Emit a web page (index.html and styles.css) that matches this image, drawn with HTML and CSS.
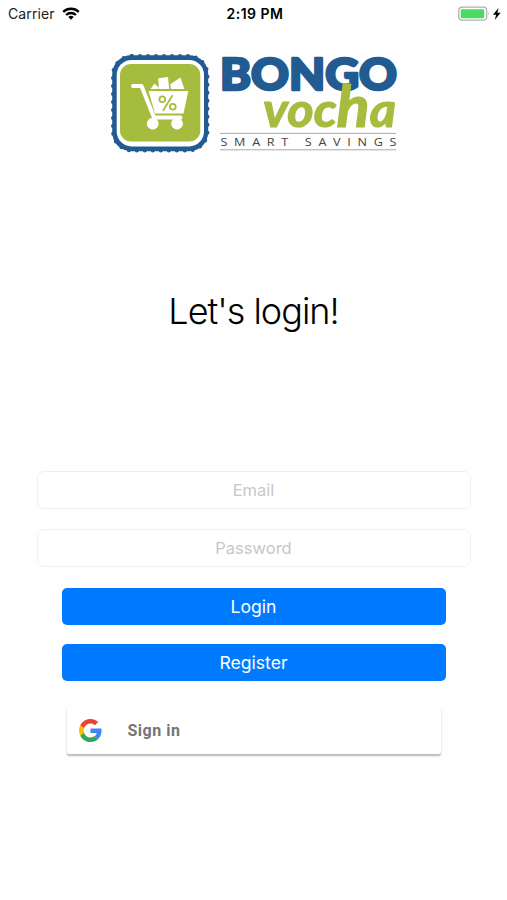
FILE: index.html
```html
<!DOCTYPE html>
<html lang="en">
<head>
    <meta charset="UTF-8">
    <meta name="viewport" content="width=device-width, initial-scale=1.0">
    <title>Bongo Vocha | Login</title>
    <link rel="stylesheet" href="styles.css">
</head>
<body>
    <!-- Status bar -->
    <header class="status-bar">
        <div class="carrier">
            <span class="carrier-name">Carrier</span>
            <svg class="wifi" width="18" height="13" viewBox="0 0 18 13" fill="none" stroke="#000" stroke-width="2.3">
                <path d="M1.2 4.9a11.2 11.2 0 0 1 15.6 0"/>
                <path d="M4.1 8a7 7 0 0 1 9.8 0"/>
                <path d="M9 12.8 6.3 10.1a3.9 3.9 0 0 1 5.4 0z" fill="#000" stroke="none"/>
            </svg>
        </div>
        <span class="time">2:19 PM</span>
        <div class="power">
            <svg width="44" height="16" viewBox="0 0 44 16">
                <rect x="0.7" y="1.2" width="28" height="13" rx="3.4" fill="#fff" stroke="#b0b0b0" stroke-width="1.2"/>
                <rect x="2.7" y="3.2" width="23.5" height="9" rx="1.3" fill="#4cd964"/>
                <path d="M30.3 5.8q1.7 1.9 0 3.8z" fill="#aaa"/>
                <path d="M40.5 2 35 8.7h3.1L36.8 14l5.8-7.2h-3.2z" fill="#000"/>
            </svg>
        </div>
    </header>

    <main class="container">
        <!-- Logo -->
        <svg class="logo" width="290" height="104" viewBox="0 0 290 104">
            <rect class="badge-edge" x="4" y="4" width="94.5" height="94.5" rx="19"/>
            <rect class="badge-blue" x="3.2" y="3.2" width="96" height="96" rx="19"/>
            <rect class="badge-white" x="7.7" y="7.9" width="87.3" height="86.5" rx="15"/>
            <rect class="badge-green" x="11" y="12" width="80.3" height="77.5" rx="11"/>

            <g class="cart">
                <path class="cart-frame" d="M24 34h8.5l12.5 31.5h26.5"/>
                <path d="M39.5 39h39.8l-4.8 22.5H46z"/>
                <path d="M41.5 37l4-5.5 4 4v1.5z"/>
                <path d="M49.3 26.3l9.7-1.3 1.2 12H49.8z"/>
                <path d="M61.2 32.2l10.2-6.7 4 11.5H62z"/>
                <circle cx="43.7" cy="71.6" r="5.9"/>
                <circle cx="68" cy="71.6" r="5.9"/>
            </g>
            <g class="percent">
                <circle cx="53.3" cy="47.2" r="2.9"/>
                <circle cx="63.8" cy="54.8" r="2.9"/>
                <path d="M63.5 43.3l-9.5 15.5"/>
            </g>

            <text class="brand-top" x="111" y="38" textLength="177" lengthAdjust="spacingAndGlyphs">BONGO</text>
            <text class="brand-script" x="154" y="75" textLength="133" lengthAdjust="spacingAndGlyphs">voc<tspan class="tall">h</tspan>a</text>
            <path class="rule" d="M111 81.4h176M111 97.8h176"/>
            <text class="tagline" transform="translate(111.5 93.7) scale(1.1 1)" textLength="160">SMART SAVINGS</text>
        </svg>

        <h1>Let's login!</h1>

        <form class="login-form">
            <input type="text" placeholder="Email">
            <input type="password" placeholder="Password">
            <button type="button">Login</button>
            <button type="button">Register</button>
            <a class="google" href="#">
                <svg width="23" height="23" viewBox="0 0 48 48">
                    <path fill="#ea4335" d="M24 9.5c3.54 0 6.71 1.22 9.21 3.6l6.85-6.85C35.9 2.38 30.47 0 24 0 14.62 0 6.51 5.38 2.56 13.22l7.98 6.19C12.43 13.72 17.74 9.5 24 9.5z"/>
                    <path fill="#4285f4" d="M46.98 24.55c0-1.57-.15-3.09-.38-4.55H24v9.02h12.94c-.58 2.96-2.26 5.48-4.78 7.18l7.73 6c4.51-4.18 7.09-10.36 7.09-17.65z"/>
                    <path fill="#fbbc05" d="M10.53 28.59A14.5 14.5 0 0 1 9.77 24c0-1.6.27-3.14.76-4.59l-7.98-6.19A24 24 0 0 0 0 24c0 3.88.92 7.54 2.56 10.78z"/>
                    <path fill="#34a853" d="M24 48c6.48 0 11.93-2.13 15.89-5.81l-7.73-6c-2.15 1.45-4.92 2.3-8.16 2.3-6.26 0-11.57-4.22-13.47-9.91l-7.98 6.19C6.51 42.62 14.62 48 24 48z"/>
                </svg>
                <span>Sign in</span>
            </a>
        </form>
    </main>
</body>
</html>
```

FILE: styles.css
```css
* {
    margin: 0;
    padding: 0;
    box-sizing: border-box;
    font-family: 'Inter', sans-serif;
}

body {
    background: #fefefe;
    color: #000;
    height: 100vh;
    overflow: hidden;
}

/* Status bar */
.status-bar {
    display: grid;
    grid-template-columns: 1fr auto 1fr;
    align-items: center;
    height: 27px;
    padding: 0 5px 0 8px;
    font-size: 14px;
}

.carrier {
    display: flex;
    align-items: center;
    gap: 7px;
}

.carrier-name {
    color: #222;
    letter-spacing: 0.1px;
}

.time {
    font-weight: 600;
    letter-spacing: 0.5px;
}

.power {
    display: flex;
    justify-content: flex-end;
}

.container {
    display: flex;
    flex-direction: column;
    align-items: center;
    padding-top: 25px;
}

/* Logo */
.logo {
    display: block;
    overflow: visible;
}

.badge-edge {
    fill: none;
    stroke: #245a8f;
    stroke-width: 4;
    stroke-linecap: round;
    stroke-dasharray: 0 8;
}

.badge-blue {
    fill: #215b91;
}

.badge-white {
    fill: #fff;
}

.badge-green {
    fill: #a5bc3f;
}

.cart {
    fill: #fff;
}

.cart-frame {
    fill: none;
    stroke: #fff;
    stroke-width: 4;
    stroke-linecap: round;
    stroke-linejoin: round;
}

.percent {
    fill: none;
    stroke: #a5bc3f;
    stroke-width: 1.8;
}

.brand-top {
    font-family: 'Lato', sans-serif;
    font-size: 43.5px;
    font-weight: 900;
    fill: #215b91;
    stroke: #215b91;
    stroke-width: 2.6;
    stroke-linejoin: round;
}

.brand-script {
    font-family: 'Lato', sans-serif;
    font-size: 48px;
    font-style: italic;
    font-weight: 700;
    fill: #a5bc3f;
    stroke: #a5bc3f;
    stroke-width: 1.2;
    stroke-linejoin: round;
}

.brand-script .tall {
    font-family: 'Lato', sans-serif;
    font-size: 58px;
}

.rule {
    stroke: #aaa;
}

.tagline {
    font-family: 'Open Sans', sans-serif;
    font-size: 11.5px;
    fill: #444;
}

h1 {
    margin-top: 133px;
    font-size: 36px;
    font-weight: 300;
    line-height: 44px;
    letter-spacing: -1px;
}

/* Form */
.login-form {
    display: flex;
    flex-direction: column;
    align-items: center;
    width: 434px;
    margin-top: 138px;
}

input {
    width: 100%;
    height: 38px;
    margin-bottom: 20px;
    background: #fff;
    border: 1.5px solid #f0f0f0;
    border-radius: 7px;
    padding-bottom: 1px;
    font-size: 16.5px;
    text-align: center;
}

input::placeholder {
    color: #c7c7cb;
}

button {
    width: 384px;
    height: 37px;
    margin-bottom: 19px;
    background: #007aff;
    color: #fff;
    border: none;
    border-radius: 5px;
    font-size: 17.6px;
}

input + button {
    margin-top: 1px;
}

.google {
    display: flex;
    align-items: center;
    gap: 26px;
    width: 374px;
    height: 47px;
    margin-top: 7px;
    padding-left: 12px;
    background: #fff;
    border-radius: 2px;
    box-shadow: 0 2px 2px rgba(0, 0, 0, 0.28);
    color: #757575;
    text-decoration: none;
}

.google span {
    font-family: 'Roboto', sans-serif;
    font-size: 16px;
    font-weight: 700;
    letter-spacing: 0.5px;
}
```
